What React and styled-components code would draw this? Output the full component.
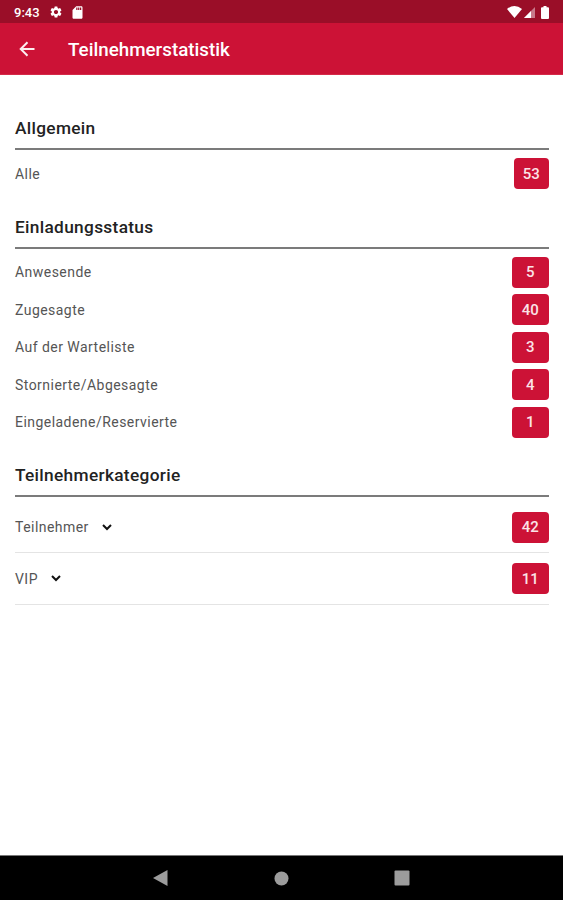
import React from "react";
import { MdSdCard, MdSettings } from "react-icons/md";
import styled, { createGlobalStyle } from "styled-components";

const GlobalStyle = createGlobalStyle`
    * {
        box-sizing: border-box;
    }
    body {
        margin: 0;
        background-color: white;
        font-family: Roboto, "Liberation Sans", sans-serif;
    }
`;

const Container = styled.div`
    height: 900px;
    display: flex;
    flex-direction: column;
    overflow: hidden;
`;

const StatusBar = styled.div`
    height: 23px;
    padding: 1px 14px 0px 14px;
    display: flex;
    align-items: center;
    justify-content: space-between;
    color: white;
    background-color: #9a0e28;
`;
const StatusGroup = styled.div`
    display: flex;
    align-items: center;
    gap: ${(props) => props.$gap};
`;
const Clock = styled.span`
    width: 28px;
    font-size: 13px;
    font-weight: 500;
    white-space: nowrap;
`;
const Battery = styled.svg`
    margin-left: 4px;
`;

const AppBar = styled.header`
    height: 52px;
    padding-left: 19px;
    display: flex;
    align-items: center;
    color: white;
    background-color: #cc1236;
    border-bottom: 1px solid #d52a48;
`;
const BackIcon = styled.svg`
    fill: none;
    stroke: #fdeef0;
    stroke-width: 2px;
`;
const Title = styled.h1`
    margin: 2px 0px 0px 33px;
    font-size: 18.8px;
    font-weight: 500;
`;

const Content = styled.main`
    flex: 1;
    padding: 19px 14px 0px 15px;
`;
const Heading = styled.h2`
    height: 56px;
    margin: 0px 0px 5px;
    padding-top: 22px;
    border-bottom: 2px solid #7b7b7b;
    font-size: 17.3px;
    font-weight: 500;
    line-height: 25px;
    letter-spacing: 0.32px;
    color: #222;
`;
const Row = styled.div`
    height: ${(props) => (props.$expandable ? "51.4px" : "37.5px")};
    display: flex;
    align-items: center;
    justify-content: space-between;
    border-bottom: ${(props) =>
        props.$expandable ? "1px solid #e4e4e4" : "none"};
`;
const Label = styled.span`
    display: flex;
    align-items: center;
    gap: 13px;
    font-size: 14px;
    letter-spacing: 0.46px;
    color: #555;
`;
const Chevron = styled.svg`
    fill: none;
    stroke: #111;
    stroke-width: 2px;
`;
const Badge = styled.span`
    width: ${(props) => (props.$narrow ? "35.5px" : "37.5px")};
    height: 31px;
    display: flex;
    align-items: center;
    justify-content: center;
    border-radius: 4px;
    font-size: 15px;
    font-weight: 500;
    color: #fbe3e7;
    background-color: #cc1236;
`;

const NavBar = styled.nav`
    height: 45px;
    padding: 0px 153px;
    display: flex;
    align-items: center;
    justify-content: space-between;
    background-color: black;
    border-top: 1px solid #777;
`;

const sections = [
    { title: "Allgemein", rows: [["Alle", 53]], narrow: true },
    {
        title: "Einladungsstatus",
        rows: [
            ["Anwesende", 5],
            ["Zugesagte", 40],
            ["Auf der Warteliste", 3],
            ["Stornierte/Abgesagte", 4],
            ["Eingeladene/Reservierte", 1],
        ],
    },
    {
        title: "Teilnehmerkategorie",
        rows: [
            ["Teilnehmer", 42],
            ["VIP", 11],
        ],
        expandable: true,
    },
];

const App = () => {
    return (
        <>
            <GlobalStyle />
            <Container>
                <StatusBar>
                    <StatusGroup $gap="7px">
                        <Clock>9:43</Clock>
                        <MdSettings size={14} />
                        <MdSdCard size={15} />
                    </StatusGroup>
                    <StatusGroup $gap="2px">
                        <svg width="15" height="12" viewBox="0 0 15 12">
                            <path
                                d="M0 3Q7.5 -3 15 3L7.5 12Z"
                                fill="currentColor"
                            />
                        </svg>
                        <svg width="11" height="11" viewBox="0 0 11 11">
                            <path d="M0 11L11 0V11Z" fill="#c8788a" />
                            <path d="M0 11L7 4V11Z" fill="currentColor" />
                        </svg>
                        <Battery width="8" height="13" viewBox="0 0 8 13">
                            <path
                                d="M2.5 0H5.5V1.3H7Q8 1.3 8 2.3V12Q8 13 7 13H1Q0 13 0 12V2.3Q0 1.3 1 1.3H2.5Z"
                                fill="currentColor"
                            />
                        </Battery>
                    </StatusGroup>
                </StatusBar>
                <AppBar>
                    <BackIcon width="16" height="16" viewBox="0 0 16 16">
                        <path d="M15.5 8H2M8.5 1.2L1.7 8L8.5 14.8" />
                    </BackIcon>
                    <Title>Teilnehmerstatistik</Title>
                </AppBar>
                <Content>
                    {sections.map((section) => (
                        <section key={section.title}>
                            <Heading>{section.title}</Heading>
                            {section.rows.map(([label, count]) => (
                                <Row
                                    key={label}
                                    $expandable={section.expandable}
                                >
                                    <Label>
                                        {label}
                                        {section.expandable && (
                                            <Chevron
                                                width="10"
                                                height="7"
                                                viewBox="0 0 10 7"
                                            >
                                                <path d="M1 1L5 5L9 1" />
                                            </Chevron>
                                        )}
                                    </Label>
                                    <Badge $narrow={section.narrow}>
                                        {count}
                                    </Badge>
                                </Row>
                            ))}
                        </section>
                    ))}
                </Content>
                <NavBar>
                    <svg width="15" height="16" viewBox="0 0 15 16">
                        <path d="M0 8L14.5 0V16Z" fill="#9c9c9c" />
                    </svg>
                    <svg width="15" height="15" viewBox="0 0 15 15">
                        <circle cx="7.5" cy="7.5" r="7" fill="#9c9c9c" />
                    </svg>
                    <svg width="16" height="16" viewBox="0 0 16 16">
                        <rect
                            x="0.5"
                            y="0.5"
                            width="15"
                            height="15"
                            rx="1"
                            fill="#9c9c9c"
                        />
                    </svg>
                </NavBar>
            </Container>
        </>
    );
};

export default App;
